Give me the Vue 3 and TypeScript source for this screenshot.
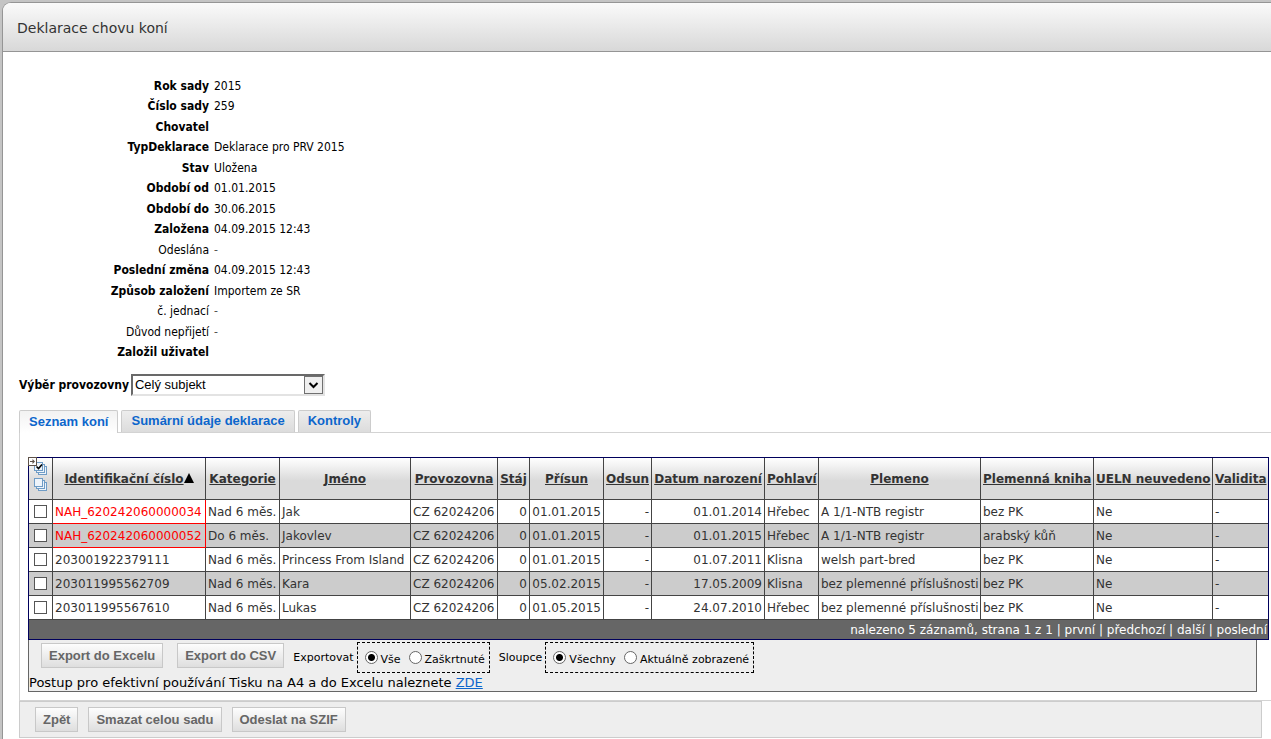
<script setup lang="ts">
import { ref } from 'vue'

interface InfoRow {
  label: string
  value: string
  muted?: boolean
}

interface Horse {
  id: string
  invalid: boolean
  category: string
  name: string
  premises: string
  stable: string
  arrival: string
  departure: string
  born: string
  sex: string
  breed: string
  studbook: string
  ueln: string
  validity: string
}

const info: InfoRow[] = [
  { label: 'Rok sady', value: '2015' },
  { label: 'Číslo sady', value: '259' },
  { label: 'Chovatel', value: '' },
  { label: 'TypDeklarace', value: 'Deklarace pro PRV 2015' },
  { label: 'Stav', value: 'Uložena' },
  { label: 'Období od', value: '01.01.2015' },
  { label: 'Období do', value: '30.06.2015' },
  { label: 'Založena', value: '04.09.2015 12:43' },
  { label: 'Odeslána', value: '-', muted: true },
  { label: 'Poslední změna', value: '04.09.2015 12:43' },
  { label: 'Způsob založení', value: 'Importem ze SR' },
  { label: 'č. jednací', value: '-', muted: true },
  { label: 'Důvod nepřijetí', value: '-', muted: true },
  { label: 'Založil uživatel', value: '' },
]

const tabs = ['Seznam koní', 'Sumární údaje deklarace', 'Kontroly']
const activeTab = ref(0)

const columns = [
  'Identifikační číslo',
  'Kategorie',
  'Jméno',
  'Provozovna',
  'Stáj',
  'Přísun',
  'Odsun',
  'Datum narození',
  'Pohlaví',
  'Plemeno',
  'Plemenná kniha',
  'UELN neuvedeno',
  'Validita',
]

function horse(
  id: string,
  invalid: boolean,
  category: string,
  name: string,
  arrival: string,
  born: string,
  sex: string,
  breed: string,
  studbook: string,
): Horse {
  return {
    id, invalid, category, name, arrival, born, sex, breed, studbook,
    premises: 'CZ 62024206', stable: '0', departure: '-', ueln: 'Ne', validity: '-',
  }
}

const horses: Horse[] = [
  horse('NAH_620242060000034', true, 'Nad 6 měs.', 'Jak', '01.01.2015', '01.01.2014', 'Hřebec', 'A 1/1-NTB registr', 'bez PK'),
  horse('NAH_620242060000052', true, 'Do 6 měs.', 'Jakovlev', '01.01.2015', '01.01.2015', 'Hřebec', 'A 1/1-NTB registr', 'arabský kůň'),
  horse('203001922379111', false, 'Nad 6 měs.', 'Princess From Island', '01.01.2015', '01.07.2011', 'Klisna', 'welsh part-bred', 'bez PK'),
  horse('203011995562709', false, 'Nad 6 měs.', 'Kara', '05.02.2015', '17.05.2009', 'Klisna', 'bez plemenné příslušnosti', 'bez PK'),
  horse('203011995567610', false, 'Nad 6 měs.', 'Lukas', '01.05.2015', '24.07.2010', 'Hřebec', 'bez plemenné příslušnosti', 'bez PK'),
]

const selected = ref<string[]>([])
const rowScope = ref('all')
const columnScope = ref('all')
</script>

<template>
  <div class="page">
    <main class="window">
      <header class="title-bar"><h1>Deklarace chovu koní</h1></header>

      <dl class="info">
        <div v-for="row in info" :key="row.label" class="info-row" :class="{ muted: row.muted }">
          <dt>{{ row.label }}</dt>
          <dd>{{ row.value }}</dd>
        </div>
      </dl>

      <div class="picker">
        <label for="premises">Výběr provozovny</label>
        <span class="select-box">
          <select id="premises">
            <option>Celý subjekt</option>
          </select>
          <svg class="select-arrow" viewBox="0 0 19 18" aria-hidden="true">
            <rect x="0.5" y="0.5" width="18" height="17" fill="#efefef" stroke="#707070" />
            <path d="M5.5 7l4 4 4-4" fill="none" stroke="#000" stroke-width="2" />
          </svg>
        </span>
      </div>

      <nav class="tabs">
        <button
          v-for="(tab, i) in tabs"
          :key="tab"
          type="button"
          class="tab"
          :class="{ active: activeTab === i }"
          @click="activeTab = i"
        >{{ tab }}</button>
      </nav>

      <section class="panel">
        <table class="grid">
          <colgroup>
            <col class="w-check" /><col class="w-id" /><col class="w-date" /><col class="w-name" />
            <col class="w-premises" /><col class="w-stable" /><col class="w-date" /><col class="w-departure" />
            <col class="w-book" /><col class="w-sex" /><col class="w-breed" /><col class="w-book" />
            <col class="w-ueln" /><col class="w-validity" />
          </colgroup>
          <thead>
            <tr>
              <th class="tools">
                <svg viewBox="0 0 23 40" width="23" height="40" aria-hidden="true">
                  <g fill="#eef4fa" stroke="#6f9cc6">
                    <rect x="9.5" y="8.5" width="8" height="8" />
                    <rect x="7.5" y="6.5" width="8" height="8" />
                    <rect x="5.5" y="4.5" width="8" height="8" />
                    <rect x="9.5" y="24.5" width="8" height="8" />
                    <rect x="7.5" y="22.5" width="8" height="8" />
                    <rect x="5.5" y="20.5" width="8" height="8" />
                  </g>
                  <path d="M7.5 8.5l2 2 3.5-4" fill="none" stroke="#000" stroke-width="1.6" />
                  <rect x="-0.5" y="-0.5" width="8" height="8" fill="#fff" stroke="#5d5148" />
                  <path d="M1 3h2.500V1L6 3.500 3.500 6V4H1z" fill="#5d5148" />
                </svg>
              </th>
              <th v-for="(c, i) in columns" :key="c">
                <a href="#">{{ c }}</a><svg v-if="i === 0" class="sort" viewBox="0 0 10 10" aria-hidden="true"><path d="M5 0l5 10H0z" /></svg>
              </th>
            </tr>
          </thead>
          <tbody>
            <tr v-for="h in horses" :key="h.id">
              <td class="check"><input v-model="selected" type="checkbox" :value="h.id" :aria-label="h.id" /></td>
              <td :class="{ invalid: h.invalid }">{{ h.id }}</td>
              <td>{{ h.category }}</td>
              <td>{{ h.name }}</td>
              <td>{{ h.premises }}</td>
              <td class="num">{{ h.stable }}</td>
              <td class="num">{{ h.arrival }}</td>
              <td class="num">{{ h.departure }}</td>
              <td class="num">{{ h.born }}</td>
              <td>{{ h.sex }}</td>
              <td>{{ h.breed }}</td>
              <td>{{ h.studbook }}</td>
              <td>{{ h.ueln }}</td>
              <td>{{ h.validity }}</td>
            </tr>
          </tbody>
          <tfoot>
            <tr>
              <td colspan="14">
                nalezeno 5 záznamů, strana 1 z 1 | <a href="#">první</a> | <a href="#">předchozí</a> | <a href="#">další</a> | <a href="#">poslední</a>
              </td>
            </tr>
          </tfoot>
        </table>

        <div class="export">
          <div class="export-row">
            <button type="button" class="btn">Export do Excelu</button>
            <button type="button" class="btn csv">Export do CSV</button>
            <span class="caption">Exportovat</span>
            <div class="choices">
              <label><input v-model="rowScope" type="radio" name="rows" value="all" />Vše</label>
              <label><input v-model="rowScope" type="radio" name="rows" value="checked" />Zaškrtnuté</label>
            </div>
            <span class="caption">Sloupce</span>
            <div class="choices">
              <label><input v-model="columnScope" type="radio" name="cols" value="all" />Všechny</label>
              <label><input v-model="columnScope" type="radio" name="cols" value="shown" />Aktuálně zobrazené</label>
            </div>
          </div>
          <p>Postup pro efektivní používání Tisku na A4 a do Excelu naleznete <a href="#">ZDE</a></p>
        </div>
      </section>

      <footer class="actions">
        <button type="button" class="btn">Zpět</button>
        <button type="button" class="btn">Smazat celou sadu</button>
        <button type="button" class="btn">Odeslat na SZIF</button>
      </footer>
    </main>
  </div>
</template>

<style>
body {
  margin: 0;
  background: #c8c8c8;
}
</style>

<style scoped>
* {
  box-sizing: border-box;
}

.page {
  display: flex;
  min-height: 100vh;
  padding: 2px 0 0 2px;
  background: #c4c4c4;
  font-family: Verdana, "DejaVu Sans", sans-serif;
  font-size: 12px;
  color: #000;
}

.window {
  flex: 1;
  min-width: 0;
  border: 1px solid #959595;
  border-width: 1px 0 0 1px;
  border-radius: 9px 0 0 0;
  background: #fff;
  overflow: hidden;
}

.title-bar {
  height: 49px;
  padding: 0 14px;
  border-bottom: 1px solid #959595;
  background: linear-gradient(#fafafa, #d8d8d8);
}

h1 {
  margin: 0;
  font-size: 14px;
  font-weight: normal;
  line-height: 50px;
  color: #333;
}

.info {
  margin: 24px 0 0;
  font-family: Tahoma, "DejaVu Sans Condensed", "DejaVu Sans", sans-serif;
}

.info-row {
  display: grid;
  grid-template-columns: 206px 1fr;
  column-gap: 5px;
  height: 20px;
  line-height: 20px;
}

.info-row:nth-child(even) {
  height: 21px;
}

dt {
  text-align: right;
  font-weight: bold;
}

dd {
  margin: 0;
}

.muted dt {
  font-weight: normal;
}

.muted dd {
  color: #555;
}

.picker {
  display: flex;
  align-items: center;
  gap: 2px;
  margin: 11px 0 0 16px;
}

.picker label {
  font-family: Tahoma, "DejaVu Sans Condensed", "DejaVu Sans", sans-serif;
  font-weight: bold;
}

.select-box {
  position: relative;
  width: 194px;
  height: 22px;
}

select {
  appearance: none;
  display: block;
  width: 100%;
  height: 100%;
  padding: 0 22px 2px 2px;
  border: 2px solid;
  border-color: #696969 #e3e3e3 #e3e3e3 #696969;
  border-radius: 0;
  background: #fff;
  font: 13px "Liberation Sans", Arial, sans-serif;
  color: #000;
}

.select-arrow {
  position: absolute;
  top: 2px;
  right: 2px;
  width: 19px;
  height: 18px;
  pointer-events: none;
}

.tabs {
  display: flex;
  gap: 3px;
  margin: 14px 0 0 16px;
}

.tab {
  height: 22px;
  padding: 0 9px 2px;
  border: 1px solid #ccc;
  border-bottom: 0;
  border-radius: 2px 2px 0 0;
  background: linear-gradient(#ededed, #dcdcdc);
  font: bold 13px/19px "Liberation Sans", Arial, sans-serif;
  color: #0c66cc;
}

.tab.active {
  position: relative;
  height: 23px;
  margin-bottom: -1px;
  background: linear-gradient(#f2f2f2, #fff);
}

.panel {
  margin-left: 16px;
  padding: 24px 2px 8px 8px;
  border: 1px solid #d3d3d3;
  border-right: 0;
}

.grid {
  width: 100%;
  table-layout: fixed;
  border: 1px solid #00005c;
  border-collapse: separate;
  border-spacing: 0;
  color: #333;
  white-space: nowrap;
}

.w-check { width: 24px; }
.w-id { width: 153px; }
.w-date { width: 74px; }
.w-name { width: 131px; }
.w-premises { width: 87px; }
.w-stable { width: 32px; }
.w-departure { width: 48px; }
.w-book { width: 113px; }
.w-sex { width: 54px; }
.w-breed { width: 162px; }
.w-ueln { width: 119px; }
.w-validity { width: 55px; }

th,
td {
  padding: 0 2px;
  border: 0 solid #444;
  border-width: 0 1px 1px 0;
  text-align: left;
}

th:last-child,
td:last-child {
  border-right: 0;
}

th {
  height: 42px;
  background: linear-gradient(#fff, #dadada 55%, #dadada);
  text-align: center;
}

th a,
tfoot a {
  color: inherit;
}

.tools {
  padding: 0;
  vertical-align: top;
}

.tools svg {
  display: block;
  overflow: visible;
}

.sort {
  width: 10px;
  height: 10px;
  fill: #000;
}

tbody td {
  height: 24px;
  padding-top: 1px;
  line-height: 22px;
}

tbody tr:nth-child(even) {
  background: #ccc;
}

td.invalid {
  border-color: #f00;
  color: #f00;
}

.num {
  text-align: right;
}

tbody .check {
  padding-top: 0;
}

input {
  appearance: none;
  width: 13px;
  height: 13px;
  margin: 0;
  border: 1px solid #555;
  background: #fff;
}

.check input {
  display: block;
  margin: 0 auto;
}

.check input:checked {
  box-shadow: inset 0 0 0 2px #fff, inset 0 0 0 6px #222;
}

tfoot td {
  height: 19px;
  padding: 0 1px;
  border: 0;
  background: #666;
  color: #fff;
  text-align: right;
}

tfoot a {
  text-decoration: none;
}

.export {
  margin-right: 12px;
  border: 1px solid #666;
  border-top: 0;
  background: #eee;
}

.export-row {
  display: flex;
  align-items: flex-start;
  padding: 2px 0 0 12px;
}

.btn {
  height: 25px;
  padding: 0 7px;
  border: 1px solid #c8c8c8;
  background: linear-gradient(#fdfdfd, #dedede);
  font: bold 13px "Liberation Sans", Arial, sans-serif;
  color: #666;
}

.export .btn {
  margin-top: 1px;
}

.export .csv {
  margin-left: 14px;
}

.caption {
  margin: 0 3px 0 9px;
  font-size: 11px;
  line-height: 32px;
}

.choices {
  display: flex;
  gap: 8px;
  height: 31px;
  padding: 0 4px 0 7px;
  border: 1px dashed #000;
  font-size: 11px;
}

.choices label {
  display: flex;
  gap: 3px;
  line-height: 34px;
}

.choices input {
  margin-top: 8px;
  border-color: #666;
  border-radius: 50%;
}

.choices input:checked {
  background: radial-gradient(circle, #000 3px, #fff 4px);
}

.export p {
  margin: 0;
  font-size: 13px;
  line-height: 17px;
}

.export p a {
  color: #0c66cc;
}

.actions {
  display: flex;
  gap: 10px;
  margin: 0 9px 0 16px;
  padding: 5px 15px;
  border: 1px solid #ccc;
  background: #eee;
}
</style>
